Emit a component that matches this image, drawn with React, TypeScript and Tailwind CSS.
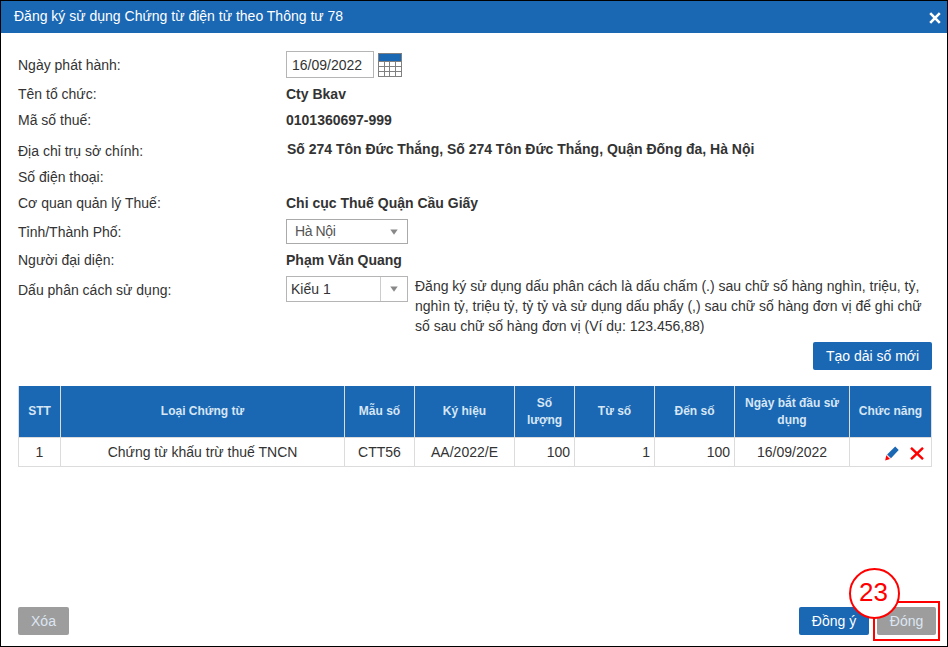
import type { ReactNode } from 'react';

function Field({ label, height, labelClass = '', valueClass = '', children }: {
  label: string;
  height: string;
  labelClass?: string;
  valueClass?: string;
  children?: ReactNode;
}) {
  return (
    <div className={`flex items-center ${height}`}>
      <div className={`w-[268px] shrink-0 ${labelClass}`}>{label}</div>
      <div className={`flex items-center font-bold ${valueClass}`}>{children}</div>
    </div>
  );
}

function Caret() {
  return (
    <svg width="8" height="6" viewBox="0 0 8 6">
      <path d="M0.3 0.5H7.7L4 5.8Z" fill="#888" />
    </svg>
  );
}

function CalendarIcon() {
  return (
    <svg width="24" height="24" viewBox="0 0 24 24" shapeRendering="crispEdges">
      <rect width="24" height="24" fill="#808080" />
      <rect x="1" y="1" width="22" height="7" fill="#1a67b3" />
      {[9, 14, 19].map((y) =>
        [1, 7, 12, 18].map((x) => (
          <rect key={`${x}-${y}`} x={x} y={y} width={x === 7 ? 4 : 5} height="4" fill="#fff" />
        )),
      )}
    </svg>
  );
}

function PencilIcon() {
  return (
    <svg width="14" height="15" viewBox="0 0 14 15">
      <path d="M10.2 0.6L13.7 4.1L6 12.2L2.1 8.4Z" fill="#1a67b3" />
      <path d="M1.3 9.2L5 12.9L0.2 14.4Z" fill="#f00" />
      <path d="M1.7 8.8L5.5 12.6" stroke="#fbb" strokeWidth="0.8" />
    </svg>
  );
}

const columns: { title: string; cls: string }[] = [
  { title: 'STT', cls: 'px-1' },
  { title: 'Loại Chứng từ', cls: 'px-1' },
  { title: 'Mẫu số', cls: 'px-1' },
  { title: 'Ký hiệu', cls: 'px-1' },
  { title: 'Số lượng', cls: 'px-2' },
  { title: 'Từ số', cls: 'px-1' },
  { title: 'Đến số', cls: 'px-1' },
  { title: 'Ngày bắt đầu sử dụng', cls: 'px-1' },
  { title: 'Chức năng', cls: 'px-1' },
];

const cells: { text: string; cls: string }[] = [
  { text: '1', cls: 'justify-center' },
  { text: 'Chứng từ khấu trừ thuế TNCN', cls: 'justify-center' },
  { text: 'CTT56', cls: 'justify-center' },
  { text: 'AA/2022/E', cls: 'justify-center' },
  { text: '100', cls: 'justify-end pr-1' },
  { text: '1', cls: 'justify-end pr-1' },
  { text: '100', cls: 'justify-end pr-1' },
  { text: '16/09/2022', cls: 'justify-center' },
];

const tableGrid = 'grid grid-cols-[42px_284px_70px_100px_60px_80px_80px_115px_82px]';

export default function App() {
  return (
    <div className="relative flex h-[647px] w-[948px] flex-col border border-black bg-white font-['Liberation_Sans',Arial,sans-serif] text-[14px] leading-[20px] whitespace-nowrap text-[#333]">
      <header className="flex h-8 shrink-0 items-center justify-between bg-[#1a67b3] pr-[6px] pl-[13px] text-white">
        <span className="pb-[2px]">Đăng ký sử dụng Chứng từ điện tử theo Thông tư 78</span>
        <svg width="12" height="12" viewBox="0 0 12 12" className="mt-px">
          <path d="M1.2 1.2L10.8 10.8M10.8 1.2L1.2 10.8" stroke="#fff" strokeWidth="2.6" />
        </svg>
      </header>

      <main className="flex flex-1 flex-col px-[17px] pt-4">
        <Field label="Ngày phát hành:" height="h-[32px]" labelClass="pb-px" valueClass="pb-px">
          <div className="flex h-[27px] w-[88px] items-center border border-[#b5b5b5] pl-[5px] font-normal">16/09/2022</div>
          <div className="ml-1">
            <CalendarIcon />
          </div>
        </Field>
        <Field label="Tên tổ chức:" height="h-[26px]">Cty Bkav</Field>
        <Field label="Mã số thuế:" height="h-[26px]">0101360697-999</Field>
        <Field label="Địa chỉ trụ sở chính:" height="h-[31px]" labelClass="pt-1" valueClass="pl-px tracking-[-0.015px]">
          Số 274 Tôn Đức Thắng, Số 274 Tôn Đức Thắng, Quận Đống đa, Hà Nội
        </Field>
        <Field label="Số điện thoại:" height="h-[26px]" />
        <Field label="Cơ quan quản lý Thuế:" height="h-[26px]">Chi cục Thuế Quận Cầu Giấy</Field>
        <Field label="Tỉnh/Thành Phố:" height="h-[31px]">
          <div className="flex h-[25px] w-[122px] items-center justify-between border border-[#aaa] pr-[9px] pl-2 font-normal text-[#555]">
            <span className="pb-[2px] tracking-[-0.4px]">Hà Nội</span>
            <Caret />
          </div>
        </Field>
        <Field label="Người đại diện:" height="h-[26px]">Phạm Văn Quang</Field>
        <div className="flex items-start pt-[3px]">
          <div className="w-[268px] shrink-0 pt-1">Dấu phân cách sử dụng:</div>
          <div className="flex h-[26px] w-[122px] shrink-0 border border-[#b5b5b5]">
            <div className="flex flex-1 items-center pl-1">Kiểu 1</div>
            <div className="flex w-[27px] items-center justify-center border-l border-[#ccc]">
              <Caret />
            </div>
          </div>
          <p className="ml-[7px]">
            Đăng ký sử dụng dấu phân cách là dấu chấm (.) sau chữ số hàng nghìn, triệu, tỷ,
            <br />
            nghìn tỷ, triệu tỷ, tỷ tỷ và sử dụng dấu phẩy (,) sau chữ số hàng đơn vị để ghi chữ
            <br />
            số sau chữ số hàng đơn vị (Ví dụ: 123.456,88)
          </p>
        </div>

        <button className="mt-[6px] mr-[-2px] h-7 w-[119px] self-end rounded-[2px] bg-[#1a67b3] text-white">
          Tạo dải số mới
        </button>

        <div className="mt-4 w-[914px] border-l border-[#dcdcdc]">
          <div className={`${tableGrid} h-[51px] bg-[#1a67b3] text-[12px] leading-[17px] font-bold text-[#d6e6f5]`}>
            {columns.map((c) => (
              <div key={c.title} className={`flex items-center justify-center border-r border-[#dcdcdc] text-center whitespace-normal ${c.cls}`}>
                {c.title}
              </div>
            ))}
          </div>
          <div className={`${tableGrid} h-[30px] border-y border-[#dcdcdc]`}>
            {cells.map((c, i) => (
              <div key={i} className={`flex items-center border-r border-[#dcdcdc] ${c.cls}`}>
                {c.text}
              </div>
            ))}
            <div className="flex items-center justify-end border-r border-[#dcdcdc] pt-[3px] pr-[7px]">
              <PencilIcon />
              <svg width="14" height="13" viewBox="0 0 14 13" className="ml-[11px]">
                <path d="M1 0.8L13 12.2M13 0.8L1 12.2" stroke="#f00" strokeWidth="2.4" />
              </svg>
            </div>
          </div>
        </div>

        <div className="mt-auto mb-[11px] flex">
          <button className="h-7 w-[51px] shrink-0 rounded-[2px] bg-[#9d9d9d] text-[#dce6f2]">Xóa</button>
          <button className="ml-[730px] h-7 w-[70px] shrink-0 rounded-[2px] bg-[#1a67b3] text-white">Đồng ý</button>
          <button className="ml-2 h-7 w-[59px] shrink-0 rounded-[2px] bg-[#9d9d9d] text-[#dce6f2]">Đóng</button>
        </div>
      </main>

      <div className="absolute top-[600px] left-[872px] h-[40px] w-[67px] border-2 border-[#f00]" />
      <div className="absolute top-[567px] left-[847.5px] flex h-[51px] w-[51px] items-center justify-center rounded-full border-2 border-[#f00] bg-white pr-px pb-[3px] text-[26px] text-[#f00]">
        23
      </div>
    </div>
  );
}
